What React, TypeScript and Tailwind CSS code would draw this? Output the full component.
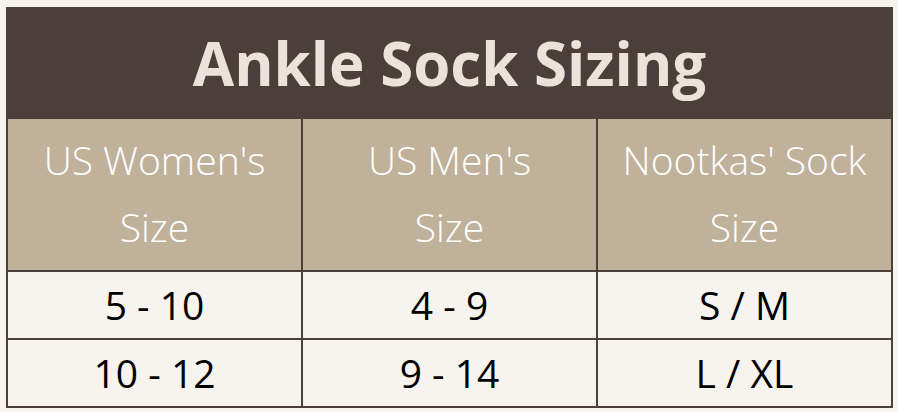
const rows = [
  ["5 - 10", "4 - 9", "S / M"],
  ["10 - 12", "9 - 14", "L / XL"],
];

const headers = [
  ["US Women's", "Size"],
  ["US Men's", "Size"],
  ["Nootkas' Sock", "Size"],
];

export default function App() {
  return (
    <div className="min-h-[412px] w-[898px] bg-[#f7f4ef] pl-[6px] pt-[7px] font-['Open_Sans',sans-serif]">
      <table className="w-[887px] border-collapse border-2 border-[#4a3f3a]">
        <thead>
          <tr>
            <th
              colSpan={3}
              className="h-[110px] bg-[#4a3f3a] text-center text-[60px] font-bold text-[#ebe3d9]"
            >
              Ankle Sock Sizing
            </th>
          </tr>
          <tr>
            {headers.map((h) => (
              <th
                key={h[0]}
                className="h-[153px] w-1/3 border-2 border-[#4a3f3a] bg-[#c0b19b] px-2 pb-1 text-center text-[39px] font-light leading-[67px] text-white"
              >
                {h[0]}
                <br />
                {h[1]}
              </th>
            ))}
          </tr>
        </thead>
        <tbody>
          {rows.map((r, i) => (
            <tr key={i}>
              {r.map((c, j) => (
                <td
                  key={j}
                  className="h-[68px] border-2 border-[#4a3f3a] text-center text-[39px] text-black"
                >
                  {c}
                </td>
              ))}
            </tr>
          ))}
        </tbody>
      </table>
    </div>
  );
}
